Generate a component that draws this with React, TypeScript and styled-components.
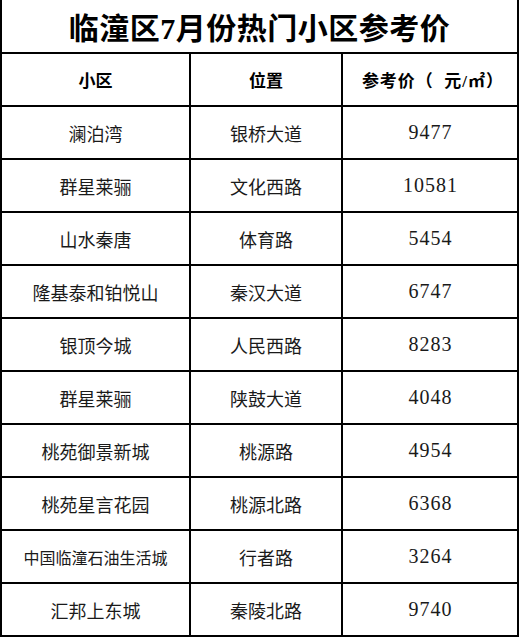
import React from 'react';
import styled, { createGlobalStyle } from 'styled-components';

const GlobalStyle = createGlobalStyle`
  html, body {
    margin: 0;
    padding: 0;
    background: #fff;
  }
`;

const Sheet = styled.div`
  width: 519px;
  height: 637px;
  box-sizing: border-box;
  display: grid;
  grid-template-columns: 187px 150px 174px;
  grid-template-rows: 52px repeat(11, 51px);
  gap: 2px;
  padding: 0 2px 2px 2px;
  background: #000;
  font-family: "Liberation Serif", "Noto Sans CJK SC", serif;
  color: #1a1a1a;
`;

const Cell = styled.div<{ $size?: number; $bold?: boolean; $span?: number }>`
  background: #fff;
  display: flex;
  align-items: center;
  justify-content: center;
  white-space: nowrap;
  font-size: ${(p) => p.$size ?? 18}px;
  font-weight: ${(p) => (p.$bold ? 700 : 400)};
  color: ${(p) => (p.$bold ? '#000' : '#1a1a1a')};
  grid-column: ${(p) => (p.$span ? `span ${p.$span}` : 'auto')};
`;

const Title = styled(Cell)`
  letter-spacing: 0.5px;
`;

const Unit = styled(Cell)`
  letter-spacing: 1px;
  padding-left: 6px;
`;

const Price = styled(Cell)`
  font-family: "Liberation Serif", serif;
  font-size: 20px;
  letter-spacing: 1px;
  padding-left: 1px;
`;

const rows = [
  ['澜泊湾', '银桥大道', '9477'],
  ['群星莱骊', '文化西路', '10581'],
  ['山水秦唐', '体育路', '5454'],
  ['隆基泰和铂悦山', '秦汉大道', '6747'],
  ['银顶今城', '人民西路', '8283'],
  ['群星莱骊', '陕鼓大道', '4048'],
  ['桃苑御景新城', '桃源路', '4954'],
  ['桃苑星言花园', '桃源北路', '6368'],
  ['中国临潼石油生活城', '行者路', '3264'],
  ['汇邦上东城', '秦陵北路', '9740'],
];

const App = () => {
  return (
    <>
      <GlobalStyle />
      <Sheet>
        <Title $span={3} $size={30} $bold>临潼区7月份热门小区参考价</Title>
        <Cell $size={17} $bold>小区</Cell>
        <Cell $size={17} $bold>位置</Cell>
        <Unit $size={17} $bold>参考价（&nbsp;&nbsp;元/㎡）</Unit>
        {rows.map(([name, place, price], i) => (
          <React.Fragment key={i}>
            <Cell $size={name.length > 8 ? 16 : 18}>{name}</Cell>
            <Cell>{place}</Cell>
            <Price>{price}</Price>
          </React.Fragment>
        ))}
      </Sheet>
    </>
  );
};

export default App;
